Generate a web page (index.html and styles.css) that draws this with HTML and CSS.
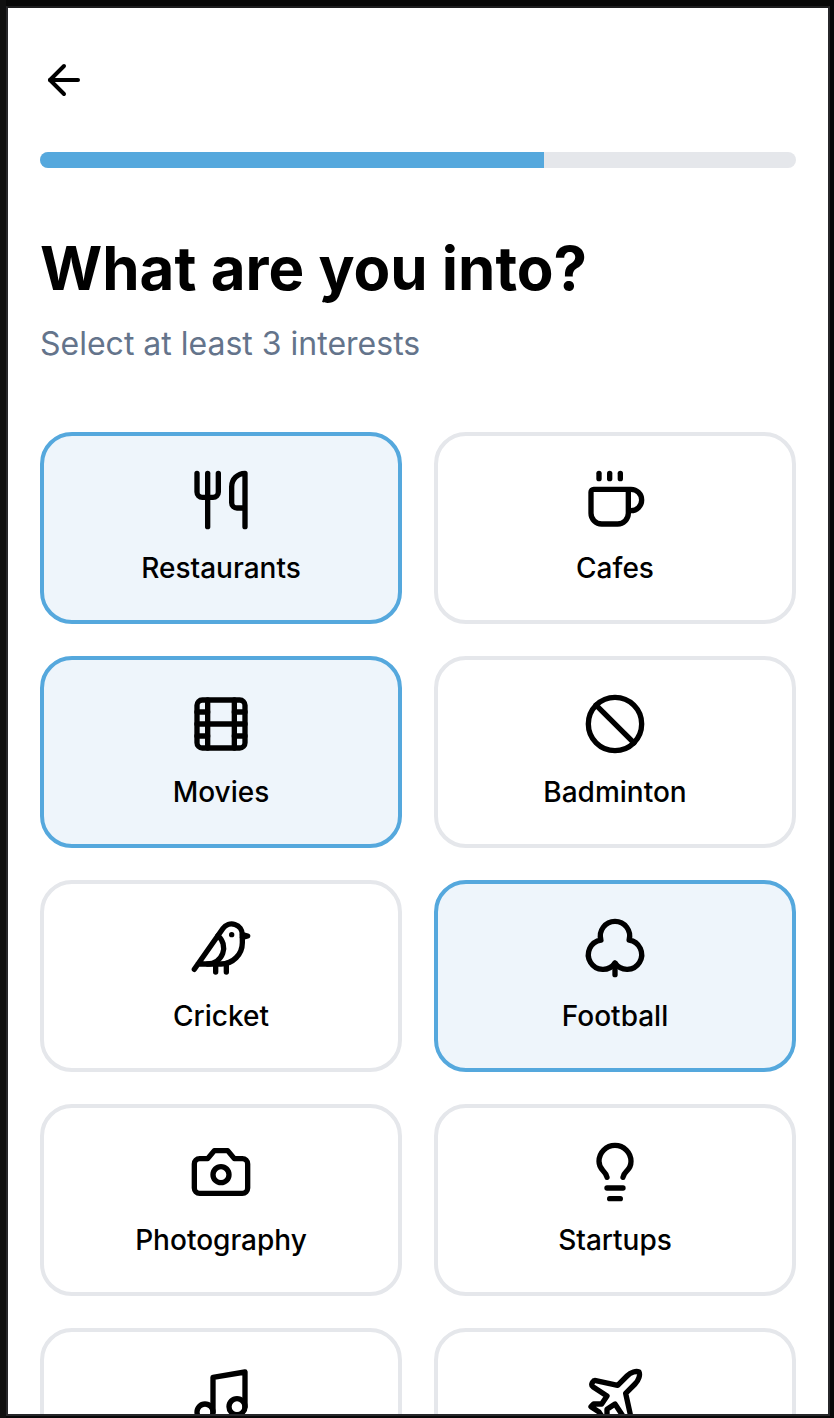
FILE: index.html
```html
<!DOCTYPE html>
<html lang="en">
<head>
<meta charset="utf-8">
<title>What are you into?</title>
<link rel="stylesheet" href="styles.css">
</head>
<body>
<main class="screen">
  <button class="back" aria-label="Back">
    <svg class="icon" viewBox="0 0 24 24"><path d="m12 19-7-7 7-7"/><path d="M19 12H5"/></svg>
  </button>
  <div class="progress"><div class="progress-fill"></div></div>
  <h1 class="title">What are you into?</h1>
  <p class="subtitle">Select at least 3 interests</p>
  <div class="grid">
    <button class="card selected">
      <svg class="icon" viewBox="0 0 24 24"><path d="M3 2v7c0 1.1.9 2 2 2h4a2 2 0 0 0 2-2V2"/><path d="M7 2v20"/><path d="M21 15V2a5 5 0 0 0-5 5v6c0 1.1.9 2 2 2h3Zm0 0v7"/></svg>
      <span class="label">Restaurants</span>
    </button>
    <button class="card">
      <svg class="icon" viewBox="0 0 24 24"><path d="M10 2v2"/><path d="M14 2v2"/><path d="M16 8a1 1 0 0 1 1 1v8a4 4 0 0 1-4 4H7a4 4 0 0 1-4-4V9a1 1 0 0 1 1-1h14a4 4 0 1 1 0 8h-1"/><path d="M6 2v2"/></svg>
      <span class="label">Cafes</span>
    </button>
    <button class="card selected">
      <svg class="icon" viewBox="0 0 24 24"><rect width="18" height="18" x="3" y="3" rx="2"/><path d="M7 3v18"/><path d="M3 7.5h4"/><path d="M3 12h18"/><path d="M3 16.5h4"/><path d="M17 3v18"/><path d="M17 7.5h4"/><path d="M17 16.5h4"/></svg>
      <span class="label">Movies</span>
    </button>
    <button class="card">
      <svg class="icon" viewBox="0 0 24 24"><circle cx="12" cy="12" r="10"/><path d="m4.9 4.9 14.2 14.2"/></svg>
      <span class="label">Badminton</span>
    </button>
    <button class="card">
      <svg class="icon" viewBox="0 0 24 24"><path d="M16 7h.01"/><path d="M3.4 18H12a8 8 0 0 0 8-8V7a4 4 0 0 0-7.28-2.3L2 20"/><path d="m20 7 2 .5-2 .5"/><path d="M10 18v3"/><path d="M14 17.75V21"/><path d="M7 18a6 6 0 0 0 3.84-10.61"/></svg>
      <span class="label">Cricket</span>
    </button>
    <button class="card selected">
      <svg class="icon" viewBox="0 0 24 24"><path d="M17.28 9.05a5.5 5.5 0 1 0-10.56 0A5.5 5.5 0 1 0 12 17.66a5.5 5.5 0 1 0 5.28-8.6Z"/><path d="M12 17.66V22"/></svg>
      <span class="label">Football</span>
    </button>
    <button class="card">
      <svg class="icon" viewBox="0 0 24 24"><path d="M14.5 4h-5L7 7H4a2 2 0 0 0-2 2v9a2 2 0 0 0 2 2h16a2 2 0 0 0 2-2V9a2 2 0 0 0-2-2h-3l-2.5-3z"/><circle cx="12" cy="13" r="3"/></svg>
      <span class="label">Photography</span>
    </button>
    <button class="card">
      <svg class="icon" viewBox="0 0 24 24"><path d="M15 14c.2-1 .7-1.7 1.5-2.5 1-.9 1.5-2.2 1.5-3.5A6 6 0 0 0 6 8c0 1 .2 2.2 1.5 3.5.7.7 1.3 1.5 1.5 2.5"/><path d="M9 18h6"/><path d="M10 22h4"/></svg>
      <span class="label">Startups</span>
    </button>
    <button class="card">
      <svg class="icon" viewBox="0 0 24 24"><path d="M9 18V5l12-2v13"/><circle cx="6" cy="18" r="3"/><circle cx="18" cy="16" r="3"/></svg>
    </button>
    <button class="card">
      <svg class="icon" viewBox="0 0 24 24"><path d="M17.8 19.2 16 11l3.5-3.5C21 6 21.5 4 21 3c-1-.5-3 0-4.5 1.5L13 8 4.8 6.2c-.5-.1-.9.1-1.1.5l-.3.5c-.2.5-.1 1 .3 1.3L9 12l-2 3H4l-1 1 3 2 2 3 1-1v-3l3-2 3.5 5.3c.3.4.8.5 1.3.3l.5-.2c.4-.3.6-.7.5-1.2z"/></svg>
    </button>
  </div>
</main>
</body>
</html>
```
FILE: styles.css
```css
* {
  box-sizing: border-box;
}

body {
  margin: 0;
  height: 1418px;
  padding: 6px 4px 2px 6px;
  overflow: hidden;
  background: linear-gradient(to right, #101010 6px, #080808 6px);
  font-family: Inter, "Liberation Sans", sans-serif;
  color: #000;
}

.screen {
  height: 1410px;
  padding: 48px 32px 0;
  overflow: hidden;
  border: 2px solid #27272a;
  border-top-color: #1e1e1f;
  background: #fff;
}

.back {
  display: block;
  width: 48px;
  height: 48px;
  margin: 0 0 48px;
  padding: 0;
  border: 0;
  background: none;
  color: inherit;
}

.icon {
  display: block;
  width: 64px;
  height: 64px;
  fill: none;
  stroke: currentColor;
  stroke-width: 2;
  stroke-linecap: round;
  stroke-linejoin: round;
}

.back .icon {
  width: 48px;
  height: 48px;
}

.progress {
  height: 16px;
  margin-bottom: 64px;
  overflow: hidden;
  border-radius: 8px;
  background: #e5e7eb;
}

.progress-fill {
  width: 66.6667%;
  height: 100%;
  background: #55a8dd;
}

.title {
  margin: 0 0 16px;
  font-size: 60px;
  font-weight: 700;
  line-height: 72px;
}

.subtitle {
  margin: 0 0 64px;
  font-size: 32px;
  line-height: 48px;
  color: #64748b;
}

.grid {
  display: grid;
  grid-template-columns: 1fr 1fr;
  gap: 32px;
}

.card {
  display: flex;
  flex-direction: column;
  align-items: center;
  gap: 16px;
  height: 192px;
  padding: 32px;
  border: 4px solid #e5e7eb;
  border-radius: 32px;
  background: #fff;
  color: inherit;
  font-family: inherit;
}

.card.selected {
  border-color: #55a8dd;
  background: #eef5fb;
}

.label {
  font-size: 28px;
  font-weight: 500;
  line-height: 40px;
}
```
